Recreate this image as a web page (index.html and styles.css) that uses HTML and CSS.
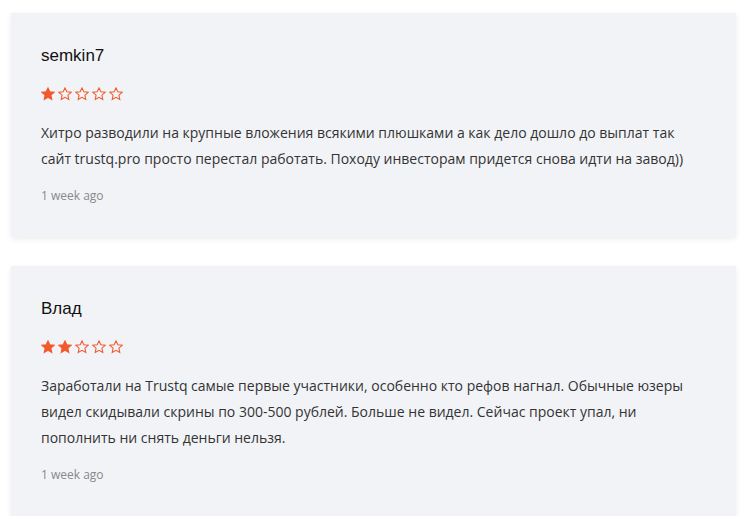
FILE: index.html
```html
<!DOCTYPE html>
<html lang="ru">
<head>
<meta charset="utf-8">
<link rel="stylesheet" href="styles.css">
</head>
<body>
<div class="list">
  <div class="card">
    <div class="name">semkin7</div>
    <div class="stars">
      <svg class="star full" viewBox="0 0 24 24"><polygon points="12,1.5 15.1,8.3 22.5,9.1 17,14.1 18.5,21.5 12,17.7 5.5,21.5 7,14.1 1.5,9.1 8.9,8.3"/></svg>
      <svg class="star" viewBox="0 0 24 24"><polygon points="12,1.5 15.1,8.3 22.5,9.1 17,14.1 18.5,21.5 12,17.7 5.5,21.5 7,14.1 1.5,9.1 8.9,8.3"/></svg>
      <svg class="star" viewBox="0 0 24 24"><polygon points="12,1.5 15.1,8.3 22.5,9.1 17,14.1 18.5,21.5 12,17.7 5.5,21.5 7,14.1 1.5,9.1 8.9,8.3"/></svg>
      <svg class="star" viewBox="0 0 24 24"><polygon points="12,1.5 15.1,8.3 22.5,9.1 17,14.1 18.5,21.5 12,17.7 5.5,21.5 7,14.1 1.5,9.1 8.9,8.3"/></svg>
      <svg class="star" viewBox="0 0 24 24"><polygon points="12,1.5 15.1,8.3 22.5,9.1 17,14.1 18.5,21.5 12,17.7 5.5,21.5 7,14.1 1.5,9.1 8.9,8.3"/></svg>
    </div>
    <p class="text">Хитро разводили на крупные вложения всякими плюшками а как дело дошло до выплат так сайт trustq.pro просто перестал работать. Походу инвесторам придется снова идти на завод))</p>
    <div class="time">1 week ago</div>
  </div>
  <div class="card">
    <div class="name">Влад</div>
    <div class="stars">
      <svg class="star full" viewBox="0 0 24 24"><polygon points="12,1.5 15.1,8.3 22.5,9.1 17,14.1 18.5,21.5 12,17.7 5.5,21.5 7,14.1 1.5,9.1 8.9,8.3"/></svg>
      <svg class="star full" viewBox="0 0 24 24"><polygon points="12,1.5 15.1,8.3 22.5,9.1 17,14.1 18.5,21.5 12,17.7 5.5,21.5 7,14.1 1.5,9.1 8.9,8.3"/></svg>
      <svg class="star" viewBox="0 0 24 24"><polygon points="12,1.5 15.1,8.3 22.5,9.1 17,14.1 18.5,21.5 12,17.7 5.5,21.5 7,14.1 1.5,9.1 8.9,8.3"/></svg>
      <svg class="star" viewBox="0 0 24 24"><polygon points="12,1.5 15.1,8.3 22.5,9.1 17,14.1 18.5,21.5 12,17.7 5.5,21.5 7,14.1 1.5,9.1 8.9,8.3"/></svg>
      <svg class="star" viewBox="0 0 24 24"><polygon points="12,1.5 15.1,8.3 22.5,9.1 17,14.1 18.5,21.5 12,17.7 5.5,21.5 7,14.1 1.5,9.1 8.9,8.3"/></svg>
    </div>
    <p class="text">Заработали на Trustq самые первые участники, особенно кто рефов нагнал. Обычные юзеры видел скидывали скрины по 300-500 рублей. Больше не видел. Сейчас проект упал, ни пополнить ни снять деньги нельзя.</p>
    <div class="time">1 week ago</div>
  </div>
</div>
</body>
</html>
```

FILE: styles.css
```css
html, body {
  margin: 0;
  padding: 0;
  background: #ffffff;
}
.list {
  display: flex;
  flex-direction: column;
  gap: 29px;
  padding: 13px 14px 0 11px;
}
.card {
  background: #f2f3f7;
  padding: 31px 30px 32px 30px;
  box-shadow: 0 2px 6px rgba(0, 0, 0, 0.08);
}
.name {
  font-family: "Liberation Sans", Arial, sans-serif;
  font-size: 17px;
  line-height: 24px;
  color: #111;
}
.stars {
  display: flex;
  gap: 3px;
  margin-top: 19px;
  height: 14px;
}
.star {
  width: 14px;
  height: 14px;
  display: block;
}
.star polygon {
  fill: none;
  stroke: #f05a2d;
  stroke-width: 1.8;
  stroke-linejoin: miter;
}
.star.full polygon {
  fill: #f05a2d;
}
.text {
  margin: 19px 0 0 0;
  font-family: "Open Sans", sans-serif;
  font-size: 14px;
  line-height: 26px;
  color: #333;
}
.time {
  margin-top: 15px;
  font-family: "Open Sans", sans-serif;
  font-size: 12px;
  line-height: 18px;
  color: #888;
}
```
